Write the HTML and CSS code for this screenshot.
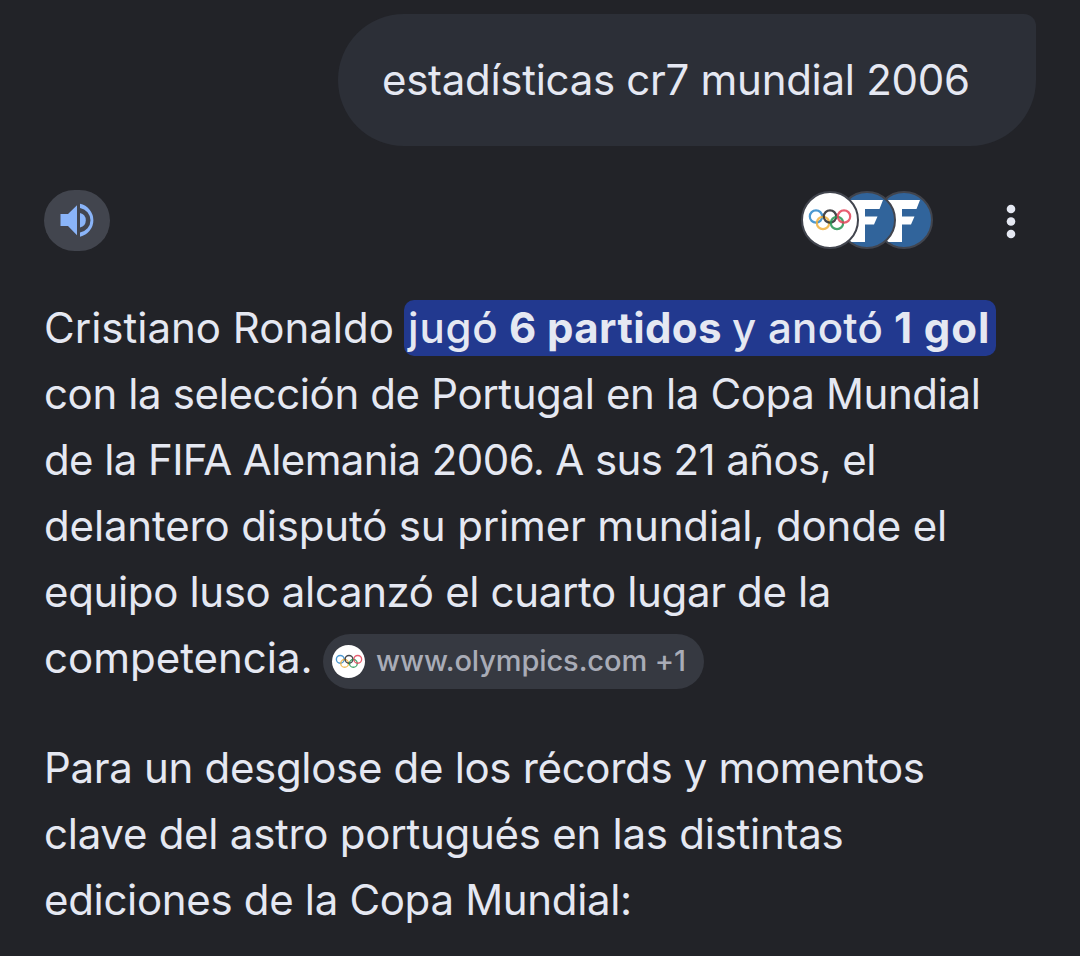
FILE: index.html
```html
<!DOCTYPE html>
<html lang="es">
<head>
<meta charset="utf-8">
<title>estadísticas cr7 mundial 2006</title>
<link rel="stylesheet" href="styles.css">
</head>
<body>
<svg class="defs" aria-hidden="true">
  <symbol id="rings" viewBox="0 0 44 24">
    <g fill="none" stroke-width="2.2" stroke-opacity=".85">
      <circle cx="8" cy="8.500" r="6.2" stroke="#2b86c9"/>
      <circle cx="15" cy="15" r="6.2" stroke="#f0b03c"/>
      <circle cx="22" cy="8.500" r="6.2" stroke="#27272b"/>
      <circle cx="29" cy="15" r="6.2" stroke="#259451"/>
      <circle cx="36" cy="8.500" r="6.2" stroke="#e44358"/>
    </g>
  </symbol>
  <symbol id="letter" viewBox="0 0 54 54">
    <path fill="#fff" d="M9 7h34l-3.500 9H25v7.500h12.500l-3.500 8h-9V49H7z"/>
  </symbol>
</svg>
<main class="page">
  <div class="query"><span class="t-query">estadísticas cr7 mundial 2006</span></div>

  <div class="toolbar">
    <button class="listen" aria-label="Escuchar">
      <svg width="66" height="61" viewBox="0 0 66 61" fill="#8ab4f8">
        <path d="M16.500 24h7.500L33 15.200v30L24 36h-7.500z"/>
        <path d="M36 23a7.500 7.500 0 0 1 0 14.600z"/>
        <path d="M36 13.800a16.800 16.800 0 0 1 0 32.900v-4.200a12.400 12.400 0 0 0 0-24.500z"/>
      </svg>
    </button>
    <div class="sources">
      <span class="source source-white"><svg width="44" height="24"><use href="#rings"/></svg></span>
      <span class="source"><svg width="54" height="54"><use href="#letter"/></svg></span>
      <span class="source"><svg width="54" height="54"><use href="#letter"/></svg></span>
    </div>
    <button class="more" aria-label="Más opciones"><svg width="10" height="36" fill="#e5e8f2"><circle cx="5" cy="5" r="4.300"/><circle cx="5" cy="17.500" r="4.300"/><circle cx="5" cy="30" r="4.300"/></svg></button>
  </div>

  <p class="answer">
    <span class="line"><span class="t-name">Cristiano Ronaldo</span><mark class="hl"><span class="t-jugo">jugó</span><b class="t-partidos">6 partidos</b><span class="t-anoto">y anotó</span><b class="t-gol">1 gol</b></mark></span>
    <span class="line t-1">con la selección de Portugal en la Copa Mundial</span>
    <span class="line t-2">de la FIFA Alemania 2006. A sus 21 años, el</span>
    <span class="line t-3">delantero disputó su primer mundial, donde el</span>
    <span class="line t-4">equipo luso alcanzó el cuarto lugar de la</span>
    <span class="line"><span class="t-5">competencia.</span><span class="chip"><span class="chip-icon"><svg width="28" height="15"><use href="#rings"/></svg></span><span class="chip-text">www.olympics.com +1</span></span></span>
  </p>
  <p class="answer">
    <span class="line t-6">Para un desglose de los récords y momentos</span>
    <span class="line t-7">clave del astro portugués en las distintas</span>
    <span class="line t-8">ediciones de la Copa Mundial:</span>
  </p>
</main>
</body>
</html>
```
FILE: styles.css
```css
* { box-sizing: border-box; }
body { margin: 0; background: #222328; color: #e5e8f2; font: 400 42px/66px Inter, "Liberation Sans", sans-serif; overflow: hidden; }
button { border: 0; padding: 0; margin: 0; background: none; }
.defs { display: none; }
.page { height: 956px; padding: 14px 44px 0; display: flex; flex-direction: column; }

.query { align-self: flex-end; width: 698px; height: 132px; padding: 33px 0 33px 44px; background: #2c2f37; border-radius: 66px 12px 66px 66px; white-space: nowrap; }

.toolbar { display: flex; align-items: center; height: 61px; margin-top: 44px; }
.listen { width: 66px; height: 61px; border-radius: 31px; background: #42454e; }
.listen svg { display: block; }
.sources { display: flex; margin: -1px 0 0 691px; }
.source { width: 58px; height: 58px; margin-right: -21px; border: 2px solid #42454e; border-radius: 50%; background: #31649b; overflow: hidden; display: flex; align-items: center; justify-content: center; position: relative; }
.source svg { flex: none; }
.source:nth-child(1) { z-index: 3; }
.source:nth-child(2) { z-index: 2; }
.source:nth-child(3) { z-index: 1; margin-right: 0; }
.source-white { background: #fff; }
.more { margin: 3px 0 0 73px; }
.more svg { display: block; }

.answer { margin: 44px 0 0; }
.line { display: flex; align-items: center; height: 66px; white-space: nowrap; }

.hl { display: flex; align-items: center; flex: none; height: 56px; margin-left: 10px; padding-left: 4px; width: 592px; border-radius: 10px; background: #22398f; color: #e5e8f2; font-weight: 500; }
.hl b { font-weight: 700; }

.chip { display: flex; align-items: center; width: 381px; height: 55px; margin: 6px 0 0 10px; padding-left: 9px; border-radius: 28px; background: #363941; }
.chip-icon { width: 33px; height: 33px; border-radius: 50%; background: #fff; display: flex; align-items: center; justify-content: center; }
.chip-text { margin: -2px 0 0 11px; color: #a9acb7; font-size: 29px; font-weight: 500; line-height: 55px; letter-spacing: -0.1px; }

.t-query { letter-spacing: -0.29px; }
.t-name { width: 350px; letter-spacing: 0; }
.t-jugo { width: 102px; letter-spacing: 0.8px; }
.t-partidos { width: 223px; margin-left: -1px; letter-spacing: 0.4px; }
.t-anoto { width: 162px; letter-spacing: 0.3px; }
.t-gol { letter-spacing: 0.9px; }
.t-1 { letter-spacing: -0.375px; }
.t-2 { letter-spacing: -0.6px; }
.t-3 { letter-spacing: -0.155px; }
.t-4 { letter-spacing: -0.355px; }
.t-5 { width: 269px; letter-spacing: 0; }
.t-6 { letter-spacing: -0.32px; }
.t-7 { letter-spacing: -0.26px; }
.t-8 { letter-spacing: -0.325px; }
```
